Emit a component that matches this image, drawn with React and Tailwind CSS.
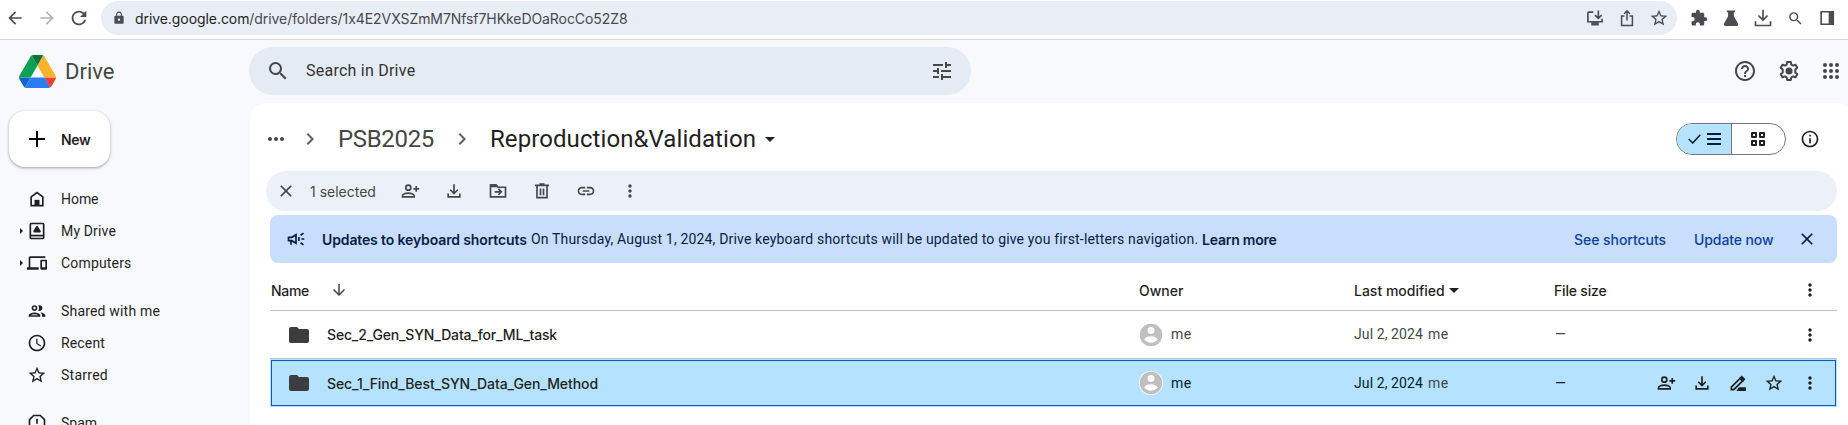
import React from "react";
import {
  MdArrowBack, MdArrowForward, MdRefresh, MdLock, MdSearch, MdTune, MdHelpOutline,
  MdOutlinePeople, MdAccessTime, MdStarBorder, MdClose, MdLink, MdMoreVert, MdMoreHoriz,
  MdChevronRight, MdInfoOutline, MdFolder, MdExtension, MdArrowDownward, MdDevices,
} from "react-icons/md";

const INTER = "font-['Inter',sans-serif] font-medium";
const INTER_BOLD = "font-['Inter',sans-serif] font-semibold";

function Svg({ s = 20, children, className = "" }) {
  return (
    <svg width={s} height={s} viewBox="0 0 24 24" fill="none" stroke="currentColor" strokeWidth="2" className={`shrink-0 ${className}`}>
      {children}
    </svg>
  );
}

const PersonAdd = ({ s }) => (
  <Svg s={s}>
    <circle cx="10" cy="8" r="3" />
    <path d="M3 19v-1.2c0-2 4-3.3 7-3.3s7 1.3 7 3.3V19z" />
    <path d="M19.5 6v7M16 9.5h7" />
  </Svg>
);
const Download = ({ s }) => (
  <Svg s={s}>
    <path d="M12 4v11M7.5 10.5 12 15l4.5-4.5M5 15v4h14v-4" />
  </Svg>
);
const MoveTo = () => (
  <Svg>
    <path d="M3 6v13h18V7.5h-9L10 5H3z" />
    <path d="M3 4h7l2 3.500H3z" fill="currentColor" stroke="none" />
    <path d="M8 13h7.5M12.5 9.5 16 13l-3.5 3.5" />
  </Svg>
);
const Trash = () => (
  <Svg>
    <path d="M6 6v14h12V6M3.500 5.200h17M9 3.700h6M10.200 9v8M13.800 9v8" />
  </Svg>
);
const Campaign = () => (
  <Svg className="text-[#041e49]">
    <path d="M3 10h4l5-3v10l-5-3H3zM6 14v5M15.5 9.5v5M17.5 7.5 21 5M18.5 12H22M17.5 16.5 21 19" />
  </Svg>
);
const Rename = () => (
  <Svg s={20}>
    <path d="M4 20v-3L14.5 6.5l3 3L7 20z" />
    <path d="M13.500 6 16.5 3 21 7.500 18 10.500z" fill="currentColor" stroke="none" />
    <path d="M13 17h8.500v4.500H10z" fill="currentColor" stroke="none" />
  </Svg>
);
const Home = () => (
  <Svg>
    <path d="M5 20V9.5l7-5.3 7 5.3V20z" />
    <path d="M9 13h6v7H9z" fill="currentColor" stroke="none" />
  </Svg>
);
const MyDrive = () => (
  <Svg>
    <rect x="4" y="3" width="16" height="18" rx="1" />
    <path d="M4 17.500h16" />
    <path d="M12 7.600 15 12.400H9z" strokeWidth="3" strokeLinejoin="round" />
  </Svg>
);
const Gear = () => (
  <Svg s={24}>
    <path
      strokeLinejoin="round"
      d="M10.2 3h3.6l.5 2.6 1.7 1 2.5-.9 1.8 3.1-2 1.7v3l2 1.7-1.8 3.1-2.5-.9-1.7 1-.5 2.6h-3.6l-.5-2.6-1.7-1-2.5.9-1.8-3.1 2-1.7v-3l-2-1.7 1.8-3.1 2.5.9 1.7-1z"
    />
    <circle cx="12" cy="12" r="3.5" fill="currentColor" stroke="none" />
  </Svg>
);
const Apps = () => (
  <svg width="24" height="24" viewBox="0 0 24 24" fill="currentColor">
    {[6, 12, 18].map((y) => [6, 12, 18].map((x) => <circle key={`${x}-${y}`} cx={x} cy={y} r="2" />))}
  </svg>
);
const Caret = ({ className = "" }) => (
  <svg width="10" height="5" viewBox="0 0 10 5" className={className}><path d="M0 0h10L5 5z" fill="currentColor" /></svg>
);
const Avatar = ({ ring }) => (
  <svg width="24" height="24" viewBox="0 0 24 24" className="shrink-0">
    {ring && <circle cx="12" cy="12" r="12" fill="#fff" />}
    <circle cx="12" cy="12" r="11.2" fill="#bfbfbf" />
    <circle cx="12" cy="7.6" r="3.5" fill="#fff" />
    <path d="M5.2 16.3c1.3-2 4-3 6.8-3s5.500 1 6.800 3c-1.400 2.100-4 3.500-6.800 3.500s-5.400-1.400-6.800-3.500z" fill="#fff" />
  </svg>
);
const Logo = () => (
  <svg width="37" height="33" viewBox="0 0 87.3 78" preserveAspectRatio="none">
    <path d="m6.600 66.850 3.850 6.650c.8 1.400 1.950 2.500 3.300 3.300l13.750-23.800h-27.500c0 1.550.4 3.100 1.200 4.500z" fill="#1262d3" />
    <path d="m43.650 25-13.750-23.800c-1.350.8-2.500 1.900-3.300 3.300l-25.400 44a9.060 9.060 0 0 0 -1.200 4.500h27.500z" fill="#0fa153" />
    <path d="m73.550 76.800c1.350-.8 2.500-1.900 3.300-3.300l1.600-2.750 7.650-13.250c.8-1.400 1.200-2.950 1.200-4.500h-27.502l5.852 11.500z" fill="#f23c32" />
    <path d="m43.650 25 13.750-23.800c-1.350-.8-2.900-1.200-4.500-1.200h-18.500c-1.600 0-3.150.45-4.500 1.200z" fill="#0c7636" />
    <path d="m59.800 53h-32.300l-13.750 23.800c1.350.8 2.900 1.200 4.500 1.200h50.800c1.600 0 3.150-.45 4.500-1.200z" fill="#2b7cee" />
    <path d="m73.400 26.500-12.700-22c-.8-1.400-1.950-2.500-3.300-3.300l-13.750 23.800 16.150 28h27.450c0-1.550-.4-3.100-1.200-4.500z" fill="#ffb32c" />
  </svg>
);

function BrowserBar() {
  return (
    <div className="flex h-10 shrink-0 items-start border-b border-[#d3d7db] bg-white text-[#4a4d51]">
      <div className="flex h-9 w-[101px] items-center pl-[5px]">
        <MdArrowBack size={20} />
        <MdArrowForward size={20} className="ml-3 text-[#b0b2b5]" />
        <MdRefresh size={22} className="ml-[11px]" />
      </div>
      <div className="mt-px flex h-[34px] w-[1576px] items-center rounded-full bg-[#e9edf6] pl-[11px] pr-[8px]">
        <MdLock size={14} />
        <span className="ml-[9px] font-['Inter',sans-serif] text-[14px] tracking-[-0.070px] text-[#46494d]">
          <span className="text-[#1f1f1f]">drive.google.com</span>/drive/folders/1x4E2VXSZmM7Nfsf7HKkeDOaRocCo52Z8
        </span>
        <div className="ml-auto flex items-center gap-[12px]">
          <Svg s={20}>
            <path d="M10 5H4.500a1 1 0 0 0-1 1v10.500h17V13M16 3v9M12 8.500l4 4 4-4" />
            <path d="M7.500 19h9" strokeWidth="4" />
          </Svg>
          <Svg s={20}><path d="M9 9.500H5.500V21h13V9.500H15M12 15V4M8.500 7 12 3.500 15.500 7" strokeWidth="1.800" /></Svg>
          <MdStarBorder size={20} />
        </div>
      </div>
      <div className="flex h-9 items-center gap-3 pl-3">
        <MdExtension size={18} className="mx-px" />
        <Svg s={20}><path d="M7 3h10v2h-1.500v5l5 9q.8 2.500-1.500 2.500H5q-2.300 0-1.500-2.500l5-9V5H7z" fill="currentColor" stroke="none" /></Svg>
        <Svg s={20}><path d="M12 2v12M6.500 9 12 14.500 17.500 9M3 16v5h18v-5" /></Svg>
        <MdSearch size={17} className="mx-[1.500px]" />
        <Svg s={20}><path d="M5 4.500h14.500v15H5z" /><path d="M14 4h6v16h-6z" fill="currentColor" stroke="none" /></Svg>
      </div>
    </div>
  );
}

function Header() {
  return (
    <div className="flex h-[62px] shrink-0 items-center pl-[19px] text-[#444746]">
      <Logo />
      <span className="ml-[9px] w-[184px] text-[22px]">Drive</span>
      <div className="flex h-12 w-[722px] items-center rounded-full bg-[#e5ebf4] pl-[17px] pr-[17px]">
        <MdSearch size={24} />
        <span className="ml-[16px] text-[16px] tracking-[0.240px] text-[#303232]">Search in Drive</span>
        <MdTune size={24} className="ml-auto" />
      </div>
      <div className="ml-auto flex items-center pr-[5px]">
        <MdHelpOutline size={24} />
        <span className="ml-5 mr-[18px]"><Gear /></span>
        <Apps />
      </div>
    </div>
  );
}

function NavItem({ icon, label, arrow, track }) {
  return (
    <div className="flex h-8 shrink-0 items-center text-[#1f1f1f]">
      <span className="flex w-[27px] justify-end pr-1">{arrow && <svg width="3" height="6" viewBox="0 0 3 6"><path d="M0 0v6l3-3z" fill="currentColor" /></svg>}</span>
      <span className="flex w-5 shrink-0 justify-center">{icon}</span>
      <span className={`ml-[14px] whitespace-nowrap text-[14px] ${track}`}>{label}</span>
    </div>
  );
}

function Sidebar() {
  return (
    <div className="w-[250px] shrink-0">
      <div className="ml-[9px] mt-[9px] flex h-14 w-[101px] items-center rounded-2xl bg-white pl-4 shadow-[0_1px_2px_rgba(60,64,67,0.3),0_1px_3px_1px_rgba(60,64,67,0.15)]">
        <Svg s={24}><path d="M12 4v16M4 12h16" /></Svg>
        <span className={`ml-3 text-[14px] tracking-[-0.396px] text-[#1f1f1f] ${INTER_BOLD}`}>New</span>
      </div>
      <div className="mt-4">
        <NavItem icon={<Home />} label="Home" track="tracking-[-0.043px]" />
        <NavItem icon={<MyDrive />} label="My Drive" arrow track="tracking-[0.154px]" />
        <NavItem icon={<MdDevices size={20} className="shrink-0" />} label="Computers" arrow track="tracking-[0.175px]" />
      </div>
      <div className="mt-4">
        <NavItem icon={<MdOutlinePeople size={20} />} label="Shared with me" track="tracking-[0.183px]" />
        <NavItem icon={<MdAccessTime size={20} />} label="Recent" track="tracking-[0.148px]" />
        <NavItem icon={<MdStarBorder size={20} />} label="Starred" track="tracking-[0.259px]" />
      </div>
      <div className="mt-4">
        <NavItem
          icon={<Svg><path d="M8 3h8l5 5v8l-5 5H8l-5-5V8zM12 7v6M12 15v2" /></Svg>}
          label="Spam"
          track="tracking-normal"
        />
      </div>
    </div>
  );
}

function Breadcrumb() {
  return (
    <div className="flex h-9 items-center text-[24px] leading-9 text-[#444746]">
      <MdMoreHoriz size={24} className="ml-[14px]" />
      <MdChevronRight size={24} className="ml-[10px] text-[#5f6368]" />
      <span className="ml-[16px] w-[95px] tracking-[-0.328px]">PSB2025</span>
      <MdChevronRight size={24} className="ml-[17px] text-[#5f6368]" />
      <span className="ml-[16px] w-[266px] tracking-[0.080px] text-[#1f1f1f]">Reproduction&amp;Validation</span>
      <Caret className="ml-[9px] text-[#1f1f1f]" />
      <div className="ml-auto flex h-8 w-[110px] overflow-hidden rounded-full border border-[#747775]">
        <div className="flex w-[55px] items-center border-r border-[#747775] bg-[#b5e3ff] pl-[11px] text-[#001d35]">
          <svg width="13" height="10" viewBox="0 0 13 10" fill="none" stroke="currentColor" strokeWidth="1.500"><path d="M.7 5 4.700 9 12.300.8" /></svg>
          <svg width="14" height="12" viewBox="0 0 14 12" className="ml-[6px]"><path d="M0 0h14v2H0zM0 5h14v2H0zM0 10h14v2H0z" fill="currentColor" /></svg>
        </div>
        <div className="flex flex-1 items-center pl-[19px] text-[#1f1f1f]">
          <svg width="14" height="14" viewBox="0 0 14 14" fill="none" stroke="currentColor" strokeWidth="2">
            <path d="M1 1h4v4H1zM9 1h4v4H9zM1 9h4v4H1zM9 9h4v4H9z" strokeLinejoin="round" />
          </svg>
        </div>
      </div>
      <MdInfoOutline size={20} className="ml-[14px] mr-7 text-[#1f1f1f]" />
    </div>
  );
}

function SelectionBar() {
  return (
    <div className="ml-4 flex h-10 w-[1571px] items-center rounded-full bg-[#ecf1f9] pl-[10px] text-[#444746]">
      <MdClose size={20} />
      <span className="ml-[14px] w-[66px] whitespace-nowrap font-['Inter',sans-serif] text-[14px]">1 selected</span>
      <div className="ml-6 flex items-center gap-6">
        <PersonAdd /><Download /><MoveTo /><Trash /><MdLink size={20} /><MdMoreVert size={20} />
      </div>
    </div>
  );
}

function Banner() {
  return (
    <div className="ml-5 mt-1 flex h-12 w-[1567px] items-center whitespace-nowrap rounded-lg bg-[#c9ddfc] pl-4 pr-5 text-[14px] text-[#041e49]">
      <Campaign />
      <span className={`ml-4 w-[209px] tracking-[-0.130px] ${INTER_BOLD}`}>Updates to keyboard shortcuts</span>
      <span className="w-[671px] tracking-[0.169px]">On Thursday, August 1, 2024, Drive keyboard shortcuts will be updated to give you first-letters navigation.</span>
      <span className={`tracking-[-0.220px] ${INTER_BOLD}`}>Learn more</span>
      <span className={`ml-auto w-[120px] tracking-[-0.047px] text-[#0842a0] ${INTER}`}>See shortcuts</span>
      <span className={`w-[103px] tracking-[-0.096px] text-[#0842a0] ${INTER}`}>Update now</span>
      <MdClose size={20} />
    </div>
  );
}

function Row({ name, track, selected }) {
  return (
    <div className={selected ? "h-12 bg-[#b5e3ff] p-px" : "h-12 border-b border-[#c0c2c1]"}>
      <div className={`flex h-full items-center text-[14px] ${selected ? "border border-[#0b57d0] text-[#001d35]" : "px-[2px] text-[#444746]"}`}>
        <MdFolder size={24} className="ml-[15px] shrink-0 text-[#3c3e3d]" />
        <span className={`ml-[16px] w-[812px] text-[#1f1f1f] ${track} ${INTER}`}>{name}</span>
        <Avatar ring={selected} />
        <span className="ml-2 w-[183px] tracking-[0.399px]">me</span>
        <span className="w-[74px] tracking-[0.101px]">Jul 2, 2024</span>
        <span className="w-[127px] tracking-[0.399px] text-[#444746]">me</span>
        <span>—</span>
        <div className="ml-auto mr-[15px] flex items-center gap-4 text-[#1f1f1f]">
          {selected && <><PersonAdd s={20} /><Download s={20} /><Rename /><MdStarBorder size={20} /></>}
          <MdMoreVert size={20} />
        </div>
      </div>
    </div>
  );
}

function Table() {
  return (
    <div className="ml-5 w-[1567px]">
      <div className={`flex h-12 items-center border-b border-[#c0c2c1] pl-px pt-2 text-[14px] text-[#1f1f1f] ${INTER}`}>
        <span className="w-[59px] tracking-[-0.299px]">Name</span>
        <MdArrowDownward size={18} className="-mt-0.5 text-[#444746]" />
        <span className="ml-[791px] w-[215px]">Owner</span>
        <span className="w-[95px]">Last modified</span>
        <Caret />
        <span className="ml-[95px] tracking-[-0.183px]">File size</span>
        <MdMoreVert size={20} className="-mt-0.5 ml-auto mr-[17px]" />
      </div>
      <Row name="Sec_2_Gen_SYN_Data_for_ML_task" track="tracking-[-0.160px]" />
      <Row name="Sec_1_Find_Best_SYN_Data_Gen_Method" track="tracking-[-0.080px]" selected />
    </div>
  );
}

export default function App() {
  return (
    <div className="flex h-[425px] w-[1848px] flex-col overflow-hidden bg-[#f8f9fd] font-['Roboto',sans-serif]">
      <BrowserBar />
      <Header />
      <div className="flex min-h-0 flex-1">
        <Sidebar />
        <div className="mt-px w-[1604px] shrink-0 rounded-t-2xl bg-white pt-[18px]">
          <div className="w-[1598px]"><Breadcrumb /></div>
          <div className="mt-[14px]"><SelectionBar /></div>
          <Banner />
          <Table />
        </div>
      </div>
    </div>
  );
}
